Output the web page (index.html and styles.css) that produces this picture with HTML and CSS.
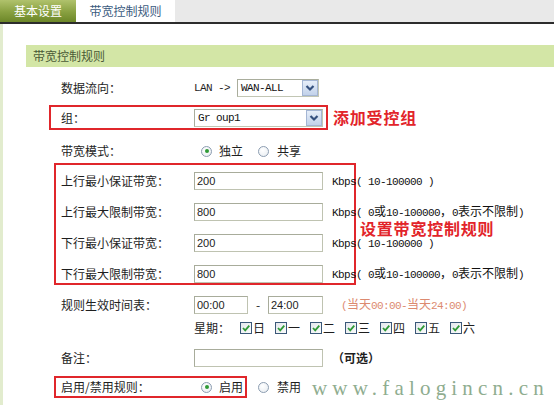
FILE: index.html
```html
<!DOCTYPE html>
<html lang="zh-CN">
<head>
<meta charset="utf-8">
<title>带宽控制规则</title>
<link rel="stylesheet" href="styles.css">
</head>
<body>
<div class="tabs">
  <div class="tab tab-on">基本设置</div>
  <div class="tab tab-cur">带宽控制规则</div>
</div>
<div class="main">
  <div class="sec-title">带宽控制规则</div>
  <div class="form">
    <div class="row r1">
      <div class="lab">数据流向：</div>
      <span class="m">LAN -&gt;</span>
      <div class="select s-wan"><span class="sv m">WAN-ALL</span><span class="arr"><svg width="14" height="14" viewBox="0 0 14 14"><path d="M3.5 5 L7 8.5 L10.5 5" fill="none" stroke="#34507e" stroke-width="2.2"/></svg></span></div>
    </div>

    <div class="anno-row ar1">
      <div class="hl hl1">
        <div class="lab">组：</div>
        <div class="select s-grp"><span class="sv m">Gr oup1</span><span class="arr"><svg width="14" height="14" viewBox="0 0 14 14"><path d="M3.5 5 L7 8.5 L10.5 5" fill="none" stroke="#34507e" stroke-width="2.2"/></svg></span></div>
      </div>
      <div class="anno">添加受控组</div>
    </div>

    <div class="row r3">
      <div class="lab">带宽模式：</div>
      <span class="radio on r-first"></span><span class="rt">独立</span>
      <span class="radio r-second"></span><span class="rt rt2">共享</span>
    </div>

    <div class="anno-row ar2">
      <div class="hl hl2">
        <div class="row">
          <div class="lab">上行最小保证带宽：</div>
          <input class="txt" type="text" value="200" readonly>
          <span class="hint"><span class="m">Kbps( 10-100000 )</span></span>
        </div>
        <div class="row">
          <div class="lab">上行最大限制带宽：</div>
          <input class="txt" type="text" value="800" readonly>
          <span class="hint"><span class="m">Kbps( 0</span>或<span class="m">10-100000</span>，<span class="m">0</span>表示不限制<span class="m">)</span></span>
        </div>
        <div class="row">
          <div class="lab">下行最小保证带宽：</div>
          <input class="txt" type="text" value="200" readonly>
          <span class="hint"><span class="m">Kbps( 10-100000 )</span></span>
        </div>
        <div class="row">
          <div class="lab">下行最大限制带宽：</div>
          <input class="txt" type="text" value="800" readonly>
          <span class="hint"><span class="m">Kbps( 0</span>或<span class="m">10-100000</span>，<span class="m">0</span>表示不限制<span class="m">)</span></span>
        </div>
      </div>
      <div class="anno anno2">设置带宽控制规则</div>
    </div>

    <div class="row r4">
      <div class="lab">规则生效时间表：</div>
      <input class="txt t-time" type="text" value="00:00" readonly>
      <span class="dash">-</span>
      <input class="txt t-time2" type="text" value="24:00" readonly>
      <span class="tnote"><span class="m">(</span>当天<span class="m">00:00-</span>当天<span class="m">24:00)</span></span>
    </div>

    <div class="row r5">
      <div class="lab"></div>
      <span class="wk">星期：</span>
      <span class="ck"><svg width="10" height="10" viewBox="0 0 10 10"><path d="M2 5 L4.2 7.3 L8.3 2.6" fill="none" stroke="#2f9a36" stroke-width="1.8"/></svg></span><span class="ct">日</span>
      <span class="ck"><svg width="10" height="10" viewBox="0 0 10 10"><path d="M2 5 L4.2 7.3 L8.3 2.6" fill="none" stroke="#2f9a36" stroke-width="1.8"/></svg></span><span class="ct">一</span>
      <span class="ck"><svg width="10" height="10" viewBox="0 0 10 10"><path d="M2 5 L4.2 7.3 L8.3 2.6" fill="none" stroke="#2f9a36" stroke-width="1.8"/></svg></span><span class="ct">二</span>
      <span class="ck"><svg width="10" height="10" viewBox="0 0 10 10"><path d="M2 5 L4.2 7.3 L8.3 2.6" fill="none" stroke="#2f9a36" stroke-width="1.8"/></svg></span><span class="ct">三</span>
      <span class="ck"><svg width="10" height="10" viewBox="0 0 10 10"><path d="M2 5 L4.2 7.3 L8.3 2.6" fill="none" stroke="#2f9a36" stroke-width="1.8"/></svg></span><span class="ct">四</span>
      <span class="ck"><svg width="10" height="10" viewBox="0 0 10 10"><path d="M2 5 L4.2 7.3 L8.3 2.6" fill="none" stroke="#2f9a36" stroke-width="1.8"/></svg></span><span class="ct">五</span>
      <span class="ck"><svg width="10" height="10" viewBox="0 0 10 10"><path d="M2 5 L4.2 7.3 L8.3 2.6" fill="none" stroke="#2f9a36" stroke-width="1.8"/></svg></span><span class="ct">六</span>
    </div>

    <div class="row r6">
      <div class="lab">备注：</div>
      <input class="txt" type="text" value="" readonly>
      <span class="opt">（可选）</span>
    </div>

    <div class="anno-row ar3">
      <div class="hl hl3">
        <div class="lab">启用/禁用规则：</div>
        <span class="radio on r-first"></span><span class="rt">启用</span>
      </div>
      <span class="radio r-out"></span><span class="rt rt2">禁用</span>
    </div>
  </div>
  <div class="watermark">www.falogincn.cn</div>
</div>
</body>
</html>
```
FILE: styles.css
```css
html, body {
  margin: 0;
  padding: 0;
}
body {
  width: 554px;
  height: 405px;
  overflow: hidden;
  background: #fff;
  color: #1e1e1e;
  font-family: "Noto Sans CJK SC", "Noto Sans", sans-serif;
  font-size: 12px;
  line-height: 16px;
}

/* tabs */
.tabs {
  display: flex;
  height: 22px;
  background: #e9e9e9;
  border-bottom: 2px solid #2c2c2c;
}
.tab {
  height: 22px;
  line-height: 22px;
  text-align: center;
}
.tab-on {
  width: 76px;
  color: #fff;
  background: linear-gradient(#b0c26c, #88a040 55%, #6c8728);
}
.tab-cur {
  width: 99px;
  background: #fff;
  color: #3b5b7e;
}

/* main */
.main {
  position: relative;
  height: 381px;
  background: linear-gradient(to right, #e2ecce 0, #e2ecce 3px, #fff 3px);
  overflow: hidden;
}
.sec-title {
  margin: 21px 0 0 26px;
  height: 22px;
  line-height: 22px;
  padding-left: 7px;
  background: #d3e6a6;
  color: #4a5a36;
}
.form {
  padding-left: 61px;
}
.row {
  display: flex;
  align-items: center;
  height: 18px;
  white-space: nowrap;
}
.lab {
  width: 133px;
  flex: none;
}
.m {
  font-family: "Liberation Mono", monospace;
  font-size: 11px;
  letter-spacing: -0.6px;
}

.r1 { margin-top: 12px; }
.r3 { margin-top: 12px; }
.r4 { margin-top: 11px; }
.r5 { margin-top: 5px; }
.r6 { margin-top: 12px; }

/* selects */
.select {
  display: flex;
  align-items: center;
  height: 18px;
  box-sizing: border-box;
  border: 1px solid #c2c6b4;
  border-top-color: #a9ad9c;
  border-left-color: #a9ad9c;
  background: #fff;
  flex: none;
}
.s-wan {
  width: 82px;
  margin-left: 7px;
}
.s-grp {
  width: 129px;
}
.sv {
  flex: 1;
  padding-left: 3px;
  color: #111;
}
.arr {
  width: 16px;
  height: 16px;
  box-sizing: border-box;
  border: 1px solid #a4b6d4;
  background: linear-gradient(#e6eef9, #c2d2ea);
  display: flex;
  align-items: center;
  justify-content: center;
}

/* annotation boxes */
.anno-row {
  display: flex;
  align-items: center;
  white-space: nowrap;
}
.hl {
  border: 2px solid #e0262b;
  box-sizing: border-box;
  flex: none;
}
.ar1 { margin-top: 8px; }
.hl1 {
  margin-left: -12px;
  padding-left: 10px;
  width: 279px;
  height: 25px;
  display: flex;
  align-items: center;
}
.anno {
  margin-left: 5px;
  color: #e2242a;
  font-size: 16px;
  font-weight: 700;
  letter-spacing: 0.8px;
  line-height: 17px;
}
.ar2 { margin-top: 3px; }
.hl2 {
  margin-left: -7px;
  padding: 7px 0 0 5px;
  width: 302px;
  height: 122px;
  display: flex;
  flex-direction: column;
  gap: 13px;
}
.anno2 {
  margin-left: 4px;
  margin-top: 8px;
}
.ar3 { margin-top: 9px; }
.hl3 {
  margin-left: -7px;
  padding-left: 5px;
  width: 193px;
  height: 22px;
  display: flex;
  align-items: center;
}

/* inputs */
.txt {
  width: 129px;
  height: 18px;
  box-sizing: border-box;
  margin: 0;
  padding: 0 2px;
  border: 1px solid #bfc3b1;
  border-top-color: #a8ac9b;
  border-left-color: #a8ac9b;
  background: #fff;
  font-family: "Liberation Sans", Arial, sans-serif;
  font-size: 11px;
  color: #222;
  outline: none;
  flex: none;
}
.hint {
  margin-left: 9px;
  color: #111;
  line-height: 13px;
}
.t-time { width: 54px; }
.t-time2 { width: 55px; }
.dash {
  width: 20px;
  text-align: center;
  flex: none;
}
.tnote {
  margin-left: 18px;
  color: #dc8a70;
}

/* radios */
.radio {
  width: 11px;
  height: 11px;
  box-sizing: border-box;
  border: 1px solid #8c9db1;
  border-radius: 50%;
  background: radial-gradient(circle at 40% 35%, #ffffff, #e6ebf0);
  display: flex;
  align-items: center;
  justify-content: center;
  flex: none;
}
.radio.on::after {
  content: "";
  width: 4px;
  height: 4px;
  border-radius: 50%;
  background: #2f9a36;
}
.r-first { margin-left: 7px; }
.r-second { margin-left: 15px; }
.r-out { margin-left: 11px; }
.rt { margin-left: 7px; }
.rt2 { margin-left: 8px; }

/* checkboxes */
.wk {
  width: 36px;
  flex: none;
}
.ck {
  width: 12px;
  height: 12px;
  box-sizing: border-box;
  margin-left: 10px;
  border: 1px solid #3a5878;
  background: linear-gradient(135deg, #e4e8ec, #fbfbfb);
  display: flex;
  align-items: center;
  justify-content: center;
  flex: none;
}
.ct { margin-left: 1px; }

.opt {
  margin-left: 9px;
  font-weight: 700;
}

/* watermark overlay */
.watermark {
  position: absolute;
  left: 312px;
  top: 354px;
  font-family: "Liberation Serif", serif;
  font-size: 21px;
  line-height: 21px;
  letter-spacing: 5.2px;
  color: #8fad8f;
  white-space: nowrap;
}
```
